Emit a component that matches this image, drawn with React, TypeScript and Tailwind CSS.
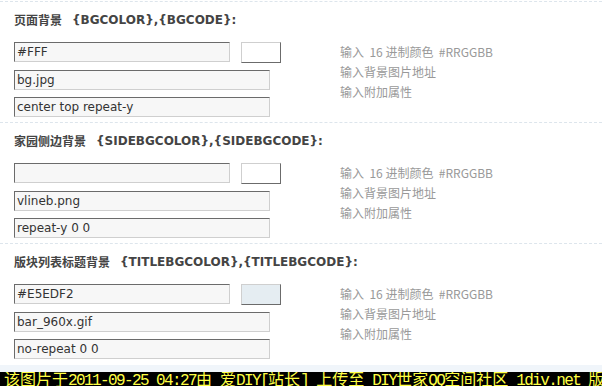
import React from "react";

const latin = { fontFamily: '"DejaVu Sans", "Noto Sans CJK SC", sans-serif' };
const cjk = { fontFamily: '"Noto Sans CJK SC", "DejaVu Sans", sans-serif' };

type Sec = { title: string; code: string; color: string; swatch: string; img: string; attr: string };

const sections: Sec[] = [
  { title: "页面背景", code: "{BGCOLOR},{BGCODE}:", color: "#FFF", swatch: "bg-white", img: "bg.jpg", attr: "center top repeat-y" },
  { title: "家园侧边背景", code: "{SIDEBGCOLOR},{SIDEBGCODE}:", color: "", swatch: "bg-white", img: "vlineb.png", attr: "repeat-y 0 0" },
  { title: "版块列表标题背景", code: "{TITLEBGCOLOR},{TITLEBGCODE}:", color: "#E5EDF2", swatch: "bg-[#E5EDF2]", img: "bar_960x.gif", attr: "no-repeat 0 0" },
];

function Field({ value, w }: { value: string; w: string }) {
  return (
    <div
      className={`${w} h-[20px] bg-[#f7f7f7] border border-t-[#6b6b6b] border-l-[#6b6b6b] border-r-[#cfcfcf] border-b-[#cfcfcf] pl-[2px] text-[12px] text-[#333] whitespace-nowrap overflow-hidden flex items-center`}
      style={latin}
    >
      {value}
    </div>
  );
}

function Section({ s }: { s: Sec }) {
  return (
    <div className="border-t border-dashed border-[#dde5ec] h-[121px] shrink-0">
      <div className="pl-[14px] mt-[11px] mb-[15px] h-[14px] flex items-center text-[12px] font-bold text-[#444] whitespace-nowrap">
        <span style={cjk}>{s.title}</span>
        <span className="ml-[10px]" style={latin}>{s.code}</span>
      </div>
      <div className="flex">
        <div className="pl-[14px] w-[340px] flex flex-col gap-[7px]">
          <div className="flex items-start gap-[11px]">
            <Field value={s.color} w="w-[216px]" />
            <div className={`w-[40px] h-[21px] ${s.swatch} border border-t-[#cfcfcf] border-l-[#cfcfcf] border-r-[#6b6b6b] border-b-[#6b6b6b]`} />
          </div>
          <Field value={s.img} w="w-[256px]" />
          <Field value={s.attr} w="w-[256px]" />
        </div>
        <div className="flex flex-col text-[12px] text-[#999] whitespace-nowrap" style={cjk}>
          <div className="h-[20px] flex items-center">输入&nbsp;&nbsp;16 进制颜色&nbsp;&nbsp;#RRGGBB</div>
          <div className="h-[20px] flex items-center">输入背景图片地址</div>
          <div className="h-[20px] flex items-center">输入附加属性</div>
        </div>
      </div>
    </div>
  );
}

function L({ children }: { children: React.ReactNode }) {
  return (
    <span className="tracking-[-1.6px] whitespace-pre" style={{ fontFamily: '"Liberation Mono", monospace' }}>
      {children}
    </span>
  );
}

export default function App() {
  return (
    <div className="w-[602px] h-[386px] bg-white overflow-hidden flex flex-col">
      <div className="h-[1px] shrink-0" />
      {sections.map((s) => (
        <Section key={s.title} s={s} />
      ))}
      <div className="h-[1px] shrink-0 bg-white" />
      <div className="h-[7px] shrink-0 bg-[#f0f5fa]" />
      <div
        className="flex-1 bg-black text-[#ffff44] text-[16px] leading-[16px] pl-[4px] whitespace-nowrap overflow-hidden flex items-center"
        style={{ fontFamily: '"Noto Sans CJK SC", monospace' }}
      >
        <span className="leading-[16px]">
          该图片于<L>2011-09-25 04:27</L>由<L> </L>爱<L>DIY[</L>站长<L>] </L>上传至<L> DIY</L>世家<L>QQ</L>空间社区<L> 1div.net </L>版权所有
        </span>
      </div>
    </div>
  );
}
